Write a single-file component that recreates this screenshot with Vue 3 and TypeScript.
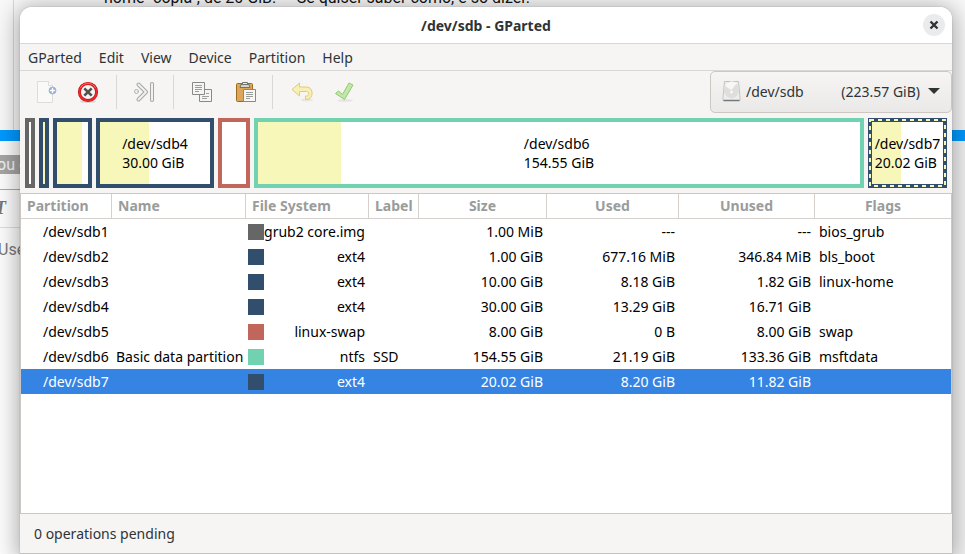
<script setup lang="ts">
import { computed, ref } from 'vue'

interface Partition {
  path: string
  name: string
  fs: string
  color: string
  label: string
  size: string
  used: string
  unused: string
  flags: string
  span: number
  fill: number
  captioned: boolean
}

const GREY = '#666666'
const NAVY = '#314e6c'
const RED = '#c1665a'
const TEAL = '#70d2b1'

const partitions: Partition[] = [
  { path: '/dev/sdb1', name: '', fs: 'grub2 core.img', color: GREY, label: '', size: '1.00 MiB', used: '---', unused: '---', flags: 'bios_grub', span: 10, fill: 0, captioned: false },
  { path: '/dev/sdb2', name: '', fs: 'ext4', color: NAVY, label: '', size: '1.00 GiB', used: '677.16 MiB', unused: '346.84 MiB', flags: 'bls_boot', span: 10, fill: 100, captioned: false },
  { path: '/dev/sdb3', name: '', fs: 'ext4', color: NAVY, label: '', size: '10.00 GiB', used: '8.18 GiB', unused: '1.82 GiB', flags: 'linux-home', span: 39, fill: 81, captioned: false },
  { path: '/dev/sdb4', name: '', fs: 'ext4', color: NAVY, label: '', size: '30.00 GiB', used: '13.29 GiB', unused: '16.71 GiB', flags: '', span: 118, fill: 44.5, captioned: true },
  { path: '/dev/sdb5', name: '', fs: 'linux-swap', color: RED, label: '', size: '8.00 GiB', used: '0 B', unused: '8.00 GiB', flags: 'swap', span: 32, fill: 0, captioned: false },
  { path: '/dev/sdb6', name: 'Basic data partition', fs: 'ntfs', color: TEAL, label: 'SSD', size: '154.55 GiB', used: '21.19 GiB', unused: '133.36 GiB', flags: 'msftdata', span: 610, fill: 13.8, captioned: true },
  { path: '/dev/sdb7', name: '', fs: 'ext4', color: NAVY, label: '', size: '20.02 GiB', used: '8.20 GiB', unused: '11.82 GiB', flags: '', span: 79, fill: 41, captioned: true },
]

const menus = ['GParted', 'Edit', 'View', 'Device', 'Partition', 'Help']
const selected = ref('/dev/sdb7')
const device = ref('/dev/sdb')
const tracks = computed(() => partitions.map((p) => `minmax(10px, ${p.span}fr)`).join(' '))
</script>

<template>
  <div class="desktop">
    <div class="backdrop" aria-hidden="true">
      <p class="message">home "copia", de 20 GiB. — Se quiser saber como, é só dizer.</p>
      <div class="band"></div>
      <div class="sheet">
        <div class="hint"><span>ou d</span></div>
        <div class="format">T</div>
        <div class="user">Use</div>
      </div>
    </div>

    <main class="window">
      <header class="titlebar">
        <h1>/dev/sdb - GParted</h1>
        <button class="close" type="button" aria-label="Close">
          <svg width="10" height="10" viewBox="0 0 10 10"><path d="M1.5 1.5l7 7M8.500 1.500l-7 7" stroke="#2e3436" stroke-width="2.400" /></svg>
        </button>
      </header>

      <nav class="menubar">
        <button v-for="m in menus" :key="m" type="button">{{ m }}</button>
      </nav>

      <div class="toolbar">
        <div class="tools">
          <button type="button" aria-label="New" disabled>
            <svg width="24" height="24" viewBox="0 0 24 24">
              <path d="M3.500 1.500h11l4 4v17h-15z" fill="#f9f9f8" stroke="#dcdcda" />
              <path d="M14.500 1.500v4h4" fill="#fff" stroke="#dcdcda" />
              <circle cx="18.500" cy="10.500" r="3.500" fill="#8da6cf" stroke="#a9bbd9" />
              <path d="M18.500 8v5M16 10.500h5" stroke="#fff" stroke-width="1.500" />
            </svg>
          </button>
          <button type="button" aria-label="Delete">
            <svg width="24" height="24" viewBox="0 0 24 24">
              <ellipse cx="12" cy="21.500" rx="8" ry="1.500" fill="#d8d6d3" />
              <circle cx="12" cy="12" r="8.600" fill="#f6f5f4" stroke="#c01317" stroke-width="3" />
              <circle cx="12" cy="12" r="8.600" fill="none" stroke="#ea2a2d" stroke-width="1.800" />
              <path d="M4.500 8a8.400 8.400 0 0 1 15 0" fill="none" stroke="#f46a66" stroke-width="1" />
              <path d="M8.300 8.300l7.400 7.400M15.700 8.300l-7.400 7.400" stroke="#50534e" stroke-width="2.600" />
            </svg>
          </button>
          <i class="rule"></i>
          <button type="button" aria-label="Resize/Move" disabled>
            <svg width="24" height="24" viewBox="0 0 24 24" fill="none" stroke-linecap="round" stroke-linejoin="round">
              <path d="M5.500 4.500l7.500 7.500-7.500 7.500" stroke="#a4a6a3" stroke-width="4" />
              <path d="M5.500 4.500l7.500 7.500-7.500 7.500" stroke="#f1f1f0" stroke-width="2" />
              <path d="M19 4v16" stroke="#a4a6a3" stroke-width="4" />
              <path d="M19 4v16" stroke="#f1f1f0" stroke-width="2" />
              <circle cx="3.500" cy="11.500" r="2" fill="#efefee" stroke="#b0b2af" />
            </svg>
          </button>
          <i class="rule"></i>
          <button type="button" aria-label="Copy">
            <svg width="24" height="24" viewBox="0 0 24 24">
              <path d="M9.500 9.500h12v12h-12z" fill="#f5f5f4" stroke="#888a85" />
              <path d="M12 16.500h7M12 18.500h5M16 13.500h3" stroke="#a0a29d" />
              <path d="M2.500 2.500h12v12h-12z" fill="#f5f5f4" stroke="#888a85" />
              <path d="M5 5.500h7M5 7.500h7M5 9.500h7M5 11.500h4" stroke="#9a9c97" />
            </svg>
          </button>
          <button type="button" aria-label="Paste">
            <svg width="24" height="24" viewBox="-2 0 24 24">
              <rect x="2.500" y="3.500" width="16" height="18" rx="1" fill="#dca75a" stroke="#a06a1c" />
              <path d="M7 4.500h8l1 3H6z" fill="#d3d7cf" stroke="#70736e" />
              <path d="M8.500 4v-1.500h5v1.500" fill="#eee" stroke="#70736e" />
              <path d="M9.500 9.500h12v12h-12z" fill="#f7f7f6" stroke="#888a85" />
              <path d="M12 12.500h7M12 14.500h7M12 16.500h7M12 18.500h4" stroke="#9a9c97" />
            </svg>
          </button>
          <i class="rule"></i>
          <button type="button" aria-label="Undo" disabled>
            <svg width="24" height="24" viewBox="-2 0 24 24">
              <ellipse cx="16" cy="20" rx="6" ry="1.500" fill="#e8e6e3" />
              <path d="M1 9.500l7.500-6.500v4h7c7.500 0 7.500 12.500 0 12.500h-1v-3.500h1c3 0 3-4.500 0-4.500h-7v4.500z" fill="#f8efb2" stroke="#e2cb74" stroke-linejoin="round" />
            </svg>
          </button>
          <button type="button" aria-label="Apply" disabled>
            <svg width="24" height="24" viewBox="-2 0 24 24">
              <ellipse cx="12" cy="20.500" rx="8" ry="1.500" fill="#e6e5e3" />
              <path d="M2.500 13.500l3-2.500 4 3.500 6.500-11.500 4 2-8.500 14.500z" fill="#c3e8a5" stroke="#92c879" stroke-linejoin="round" />
            </svg>
          </button>
        </div>

        <div class="device">
          <svg width="20" height="24" viewBox="0 0 20 24">
            <path d="M2.500 2.500h14l1.500 16v3h-17v-3z" fill="#eeeeed" stroke="#c3c3c1" />
            <path d="M1.500 21.500h16" stroke="#77787f" stroke-width="1.500" />
            <ellipse cx="9.500" cy="11" rx="7.500" ry="8.500" fill="#dededc" />
            <path d="M3 7a8 8 0 0 1 12-3l-5.500 7z" fill="#f7f7f6" />
            <circle cx="9.500" cy="13" r="1.500" fill="#f8f8f8" />
          </svg>
          <select v-model="device" aria-label="Device">
            <option value="/dev/sdb">/dev/sdb</option>
          </select>
          <span class="capacity">(223.57 GiB)</span>
          <svg class="arrow" width="12" height="6" viewBox="0 0 12 6"><path d="M0 0h12L6 6z" fill="#2e3436" /></svg>
        </div>
      </div>

      <section class="map" aria-label="Disk layout" :style="{ gridTemplateColumns: tracks }">
        <div
          v-for="p in partitions"
          :key="p.path"
          class="block"
          :style="{ borderColor: p.color, '--fill': p.fill + '%' }"
          @click="selected = p.path"
        >
          <div v-if="p.captioned" class="caption">{{ p.path }}<br />{{ p.size }}</div>
          <svg v-if="p.path === selected" class="ants">
            <rect x="2" y="2" />
          </svg>
        </div>
      </section>

      <section class="list">
        <table>
          <colgroup>
            <col class="c-path" /><col class="c-name" /><col class="c-fs" /><col class="c-label" />
            <col class="c-size" /><col class="c-used" /><col class="c-unused" /><col />
          </colgroup>
          <thead>
            <tr>
              <th>Partition</th><th>Name</th><th>File System</th><th>Label</th>
              <th class="mid">Size</th><th class="mid">Used</th><th class="mid">Unused</th><th class="mid">Flags</th>
            </tr>
          </thead>
          <tbody>
            <tr v-for="p in partitions" :key="p.path" :class="{ active: p.path === selected }" @click="selected = p.path">
              <td class="path">{{ p.path }}</td>
              <td>{{ p.name }}</td>
              <td>
                <div class="fs"><i :style="{ background: p.color }"></i><span>{{ p.fs }}</span></div>
              </td>
              <td>{{ p.label }}</td>
              <td class="num">{{ p.size }}</td>
              <td class="num">{{ p.used }}</td>
              <td class="num">{{ p.unused }}</td>
              <td>{{ p.flags }}</td>
            </tr>
          </tbody>
        </table>
      </section>

      <footer class="status">0 operations pending</footer>
    </main>
  </div>
</template>

<style>
body {
  margin: 0;
}
</style>

<style scoped>
* {
  box-sizing: border-box;
}
.desktop {
  position: relative;
  min-height: 100vh;
  padding: 7px 13px 0 20px;
  display: flex;
  overflow: hidden;
  background: #f2f2f2;
  font: 14px/19px "Noto Sans", "Open Sans", sans-serif;
  color: #2e3436;
}
button {
  font: inherit;
  color: inherit;
  background: none;
  border: 0;
  padding: 0;
}
.backdrop {
  position: absolute;
  inset: 0;
  display: flex;
  flex-direction: column;
  font-family: Roboto, sans-serif;
  background: #f8f8f8;
}
.message {
  flex: 0 0 142px;
  margin: -12px 0 0 13px;
  padding-left: 90px;
  border-left: 1px solid #d8d8d8;
  font-size: 16px;
  line-height: 20px;
  color: #111;
}
.band {
  flex: 0 0 11px;
  background: #0099ff;
}
.sheet {
  flex: 1;
  background: linear-gradient(90deg, #fcfcfc 50%, #f2f2f2 50%);
  font-size: 16px;
  color: #777;
}
.hint,
.format {
  width: 50%;
}
.hint {
  height: 49px;
  padding-top: 14px;
  border-bottom: 1px solid #aaa;
}
.hint span {
  display: block;
  width: 40px;
  line-height: 19px;
  text-indent: -3px;
  background: #a5a5a5;
  color: #f4f4f4;
}
.format {
  height: 38px;
  font: italic bold 18px/37px "Liberation Serif", serif;
  text-indent: -5px;
  border-bottom: 1px solid #ddd;
}
.user {
  line-height: 44px;
  text-indent: -2px;
}
.window {
  position: relative;
  flex: 1;
  min-width: 0;
  display: flex;
  flex-direction: column;
  border-bottom: 1px solid #c4c2c0;
  border-radius: 12px 12px 0 0;
  background: #f6f5f4;
  box-shadow: 0 0 1px 1px rgba(0, 0, 0, 0.06), 0 3px 22px 3px rgba(0, 0, 0, 0.32);
}
.titlebar {
  display: grid;
  grid-template-columns: 1fr auto 1fr;
  align-items: center;
  height: 37px;
  padding: 0 7px;
  border-bottom: 1px solid #dad8d6;
  border-radius: 12px 12px 0 0;
  background: #fff;
}
.titlebar h1 {
  grid-column: 2;
  margin: 0;
  font-size: 14px;
  line-height: 19px;
}
.close {
  justify-self: end;
  display: grid;
  place-items: center;
  width: 22px;
  height: 22px;
  border-radius: 50%;
  background: #ebebeb;
}
.menubar {
  display: flex;
  gap: 17px;
  height: 27px;
  padding: 0 8px;
  border-bottom: 1px solid #dad8d6;
}
.toolbar {
  display: flex;
  justify-content: space-between;
  height: 42px;
}
.tools {
  display: flex;
  align-items: center;
  padding-left: 5px;
}
.tools button {
  display: grid;
  place-items: center;
  width: 42px;
  height: 42px;
}
.tools svg {
  display: block;
  overflow: visible;
}
.rule {
  width: 1px;
  height: 34px;
  margin: 0 7px;
  background: #dad8d6;
}
.device {
  display: flex;
  align-items: center;
  width: 242px;
  padding: 0 11px 2px;
  border: 1px solid #cdc7c2;
  border-radius: 5px;
  background: linear-gradient(#f6f5f4, #ebe9e7);
}
.device select {
  flex: 1;
  min-width: 0;
  padding: 0 4px;
  border: 0;
  appearance: none;
  background: none;
  font: inherit;
  color: inherit;
}
.arrow {
  margin-left: 8px;
}
.map {
  display: grid;
  gap: 4px;
  padding: 5px;
}
.block {
  position: relative;
  display: grid;
  place-items: center;
  height: 70px;
  border: 4px solid;
  background: linear-gradient(90deg, #f8f7ba var(--fill), #fff var(--fill)) padding-box;
}
.caption {
  white-space: nowrap;
  color: #000;
}
.ants {
  position: absolute;
  top: -4px;
  left: -4px;
  width: calc(100% + 8px);
  height: calc(100% + 8px);
}
.ants rect {
  width: calc(100% - 4px);
  height: calc(100% - 4px);
  fill: none;
  stroke: #f8f7ba;
  stroke-width: 2;
  stroke-dasharray: 4 4;
}
.list {
  flex: 1;
  border: 1px solid #cbc7c3;
  background: #fff;
}
table {
  width: 100%;
  table-layout: fixed;
  border-collapse: separate;
  border-spacing: 0;
}
.c-path { width: 91px; }
.c-name { width: 134px; }
.c-fs { width: 123px; }
.c-label { width: 50px; }
.c-size { width: 128px; }
.c-used { width: 132px; }
.c-unused { width: 136px; }
th {
  height: 25px;
  padding: 0 6px 2px;
  border-right: 1px solid #d5d0cc;
  border-bottom: 1px solid #d5d0cc;
  text-align: left;
  white-space: nowrap;
  color: #9a9c9c;
}
th:last-child {
  border-right: 0;
}
th.mid {
  text-align: center;
}
td {
  height: 25px;
  padding: 0 4px;
  color: #000;
  white-space: nowrap;
}
.path {
  padding-left: 22px;
}
.num {
  text-align: right;
}
.fs {
  display: flex;
  justify-content: space-between;
  align-items: center;
  margin-left: -2px;
}
.fs i {
  width: 16px;
  height: 16px;
}
.active td {
  background: #3584e4;
  color: #fff;
}
.status {
  height: 39px;
  padding: 0 14px;
  line-height: 39px;
}
</style>
